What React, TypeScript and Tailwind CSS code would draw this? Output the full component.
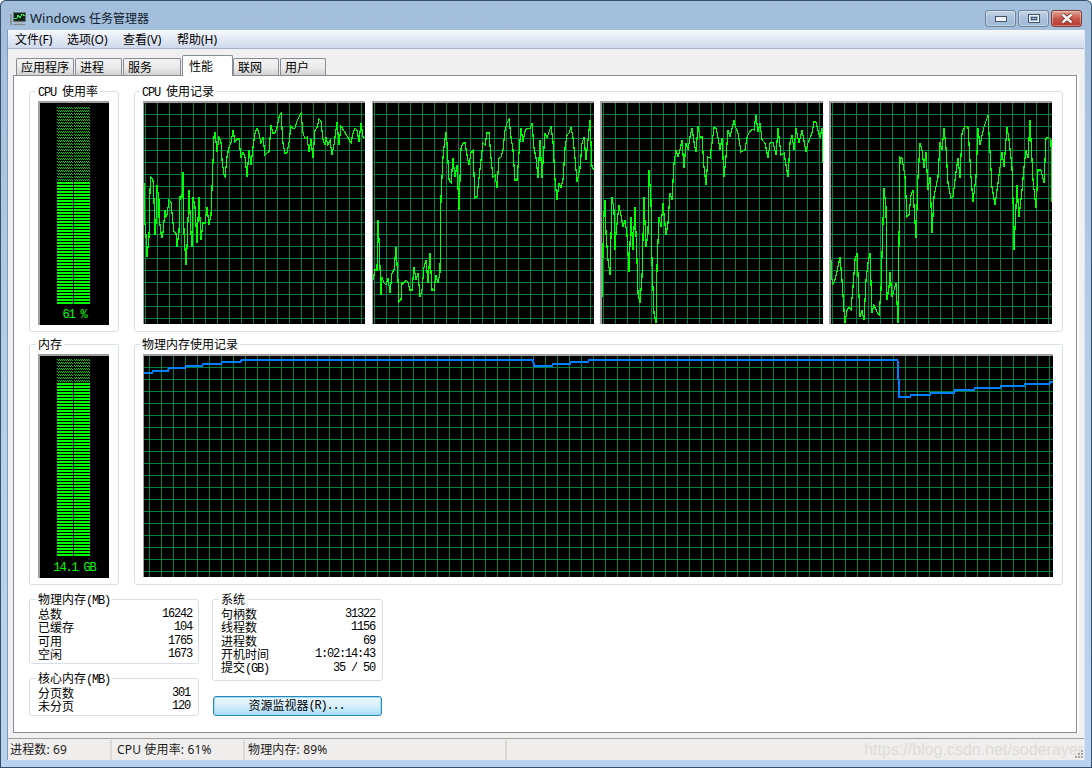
import React from "react";

const G1 = "12,250 12,340 18,405 22,470 27,410 30,270 34,230 38,240 41,300 45,405 49,370 52,255 56,300 58,350 62,400 66,415 70,395 74,330 78,350 82,345 88,300 94,305 98,370 102,395 108,400 112,440 116,395 120,290 126,290 129,215 133,400 137,495 140,440 146,280 148,270 152,400 156,440 160,290 164,320 170,430 178,290 184,420 190,370 196,370 202,320 208,375 214,345 218,185 222,110 226,95 230,155 236,110 242,125 246,180 252,225 256,230 262,170 268,140 274,130 280,90 286,125 292,118 298,118 304,175 310,155 316,170 322,230 328,150 334,195 340,140 346,100 352,85 358,100 364,130 370,110 376,165 382,158 388,155 394,75 400,100 406,98 412,85 418,50 424,38 428,130 434,158 440,160 446,130 452,78 458,88 464,85 470,62 478,50 484,40 490,100 496,118 502,112 508,155 514,118 520,175 526,90 532,85 538,58 544,62 548,120 554,135 558,110 564,135 570,120 576,165 582,135 590,65 596,135 604,78 612,92 620,108 632,130 640,100 646,85 652,90 658,125 664,70 670,110 675,115";
const G2 = "10,540 14,510 20,510 24,360 28,420 32,585 36,530 42,550 48,555 54,535 60,580 66,520 72,510 78,440 84,540 88,605 92,600 96,548 102,548 108,540 114,545 120,570 126,570 132,500 138,540 144,520 150,590 156,570 162,500 168,480 174,550 180,460 186,570 192,570 198,525 204,550 210,515 214,290 218,170 222,140 228,95 232,130 236,240 242,250 248,175 254,230 260,195 266,330 272,145 278,130 284,130 290,165 296,195 302,155 308,150 314,295 320,290 326,235 332,180 338,130 344,135 350,100 356,98 362,175 368,230 374,225 380,265 386,175 392,172 398,150 404,90 410,70 416,58 422,110 428,150 434,240 440,240 446,160 452,85 458,125 464,92 470,85 480,88 486,70 492,145 498,175 504,235 510,120 516,235 524,100 530,115 536,95 542,78 548,125 554,240 560,300 566,250 572,265 578,240 586,145 592,105 598,100 604,80 610,115 616,175 622,245 630,205 636,130 642,110 648,180 656,90 660,60 666,200 672,210";
const G3 = "22,430 22,590 26,340 30,300 34,400 40,480 46,525 52,290 56,330 60,450 64,400 72,315 78,345 84,380 90,360 96,405 102,515 108,350 114,450 120,320 126,480 130,580 136,610 140,530 146,290 152,440 158,400 162,210 168,300 172,490 178,640 182,670 186,500 192,350 198,380 204,310 212,405 218,370 224,280 230,300 236,190 242,150 248,170 254,150 260,120 266,205 272,130 278,150 284,110 290,85 296,125 302,155 308,78 314,110 320,110 326,200 332,255 338,170 344,175 350,130 356,85 362,85 368,110 374,150 380,115 388,230 394,170 400,90 406,110 416,60 424,85 430,100 438,155 450,150 456,110 462,100 470,88 478,90 482,45 488,95 494,70 500,120 510,130 518,175 524,130 534,125 542,165 550,85 558,165 566,160 578,230 586,130 590,105 596,150 604,85 612,130 620,90 632,155 640,130 650,100 656,65 662,65 670,90 676,115 680,85 684,190";
const G4 = "18,480 18,525 24,552 30,540 40,500 46,470 50,540 56,630 60,670 66,630 72,620 78,630 84,560 90,480 96,460 104,650 110,630 116,660 122,540 128,490 136,460 142,640 148,615 156,635 162,645 168,570 172,465 178,265 182,320 186,600 192,560 196,515 200,590 206,570 214,550 220,670 226,170 232,175 240,230 246,350 252,345 258,285 264,270 272,415 278,230 286,130 292,150 298,205 304,155 310,270 316,230 322,400 328,290 340,230 346,125 352,150 358,85 364,145 370,250 378,295 384,290 392,215 400,175 406,235 412,100 420,78 430,80 438,230 444,305 452,230 460,85 466,135 476,80 490,45 500,260 510,315 518,250 530,155 538,200 546,80 552,120 560,200 566,400 568,450 576,255 582,350 590,270 596,200 604,150 610,175 616,60 624,240 632,325 638,210 648,210 658,250 664,115 670,110 678,120 680,305";

const MEM = "144,373 152,373 153,371 168,371 169,368 185,368 186,366 202,366 203,364 221,364 222,362 240,362 242,360 533,360 534,366 552,366 553,364 570,364 571,362 588,362 589,360 897,360 898,362 899,397 910,397 911,395 930,395 931,393 954,393 955,390 974,390 975,388 1000,388 1001,386 1024,386 1025,384 1049,384 1051,382 1053,382";

const mono = "font-['Liberation_Mono','Noto_Sans_CJK_SC',monospace] text-[12px] tracking-[-1.2px]";

function M({ children }: { children: React.ReactNode }) {
  return <span className={mono}>{children}</span>;
}

function Group({ title, left, className, children }: { title: React.ReactNode; left: string; className: string; children?: React.ReactNode }) {
  return (
    <div className={`relative rounded-[3px] border border-[#d5dfe5] ${className}`}>
      <div className={`absolute -top-[7px] bg-white px-[2px] leading-[14px] whitespace-pre ${left}`}>{title}</div>
      {children}
    </div>
  );
}

function DimRow({ x, y }: { x: number; y: number }) {
  const cells: React.ReactNode[] = [];
  for (let r = 0; r < 2; r++) {
    for (let c = r % 2; c < 16; c += 2) {
      cells.push(<rect key={`${r}-${c}`} x={x + c} y={y + r} width="1" height="1" fill="#00d000" />);
    }
  }
  return <>{cells}</>;
}

function Meter({ top, litFrom, dimFrom, last, label }: { top: number; litFrom: number; dimFrom: number; last: number; label: string }) {
  const lit: number[] = [];
  const dim: number[] = [];
  for (let y = last; y >= litFrom; y -= 3) lit.push(y - top);
  for (let y = last - 3 * lit.length; y >= dimFrom; y -= 3) dim.push(y - top);
  return (
    <div className="relative h-[224px] w-[71px] border-t-2 border-l-2 border-[#a0a0a0] bg-black">
      <svg width="69" height="222" className="block" shapeRendering="crispEdges">
        {dim.map((y) => (
          <g key={y}>
            <DimRow x={17} y={y - 2} />
            <DimRow x={34} y={y - 2} />
          </g>
        ))}
        {lit.map((y) => (
          <g key={y}>
            <rect x="17" y={y - 2} width="16" height="2" fill="#00ff00" />
            <rect x="34" y={y - 2} width="16" height="2" fill="#00ff00" />
          </g>
        ))}
      </svg>
      <div className={`absolute bottom-[4px] left-0 right-0 text-center leading-[12px] text-[#00ff00] whitespace-pre ${mono}`}>{label}</div>
    </div>
  );
}

function CpuGraph({ data, originX, left, gridX, w, thin }: { data: string; originX: number; left: number; gridX: number; w: number; thin?: boolean }) {
  const bw = thin ? 1 : 2;
  const iw = w - bw;
  const il = left + bw;
  const pts = data
    .split(" ")
    .map((p) => {
      const [x, y] = p.split(",").map(Number);
      return `${(x / 3 + originX - il).toFixed(0)},${(y / 3 + 100 - 103).toFixed(0)}`;
    })
    .join(" ");
  const vs: number[] = [];
  for (let x = gridX - il; x < iw; x += 12) vs.push(x);
  const hs: number[] = [];
  for (let y = 114 - 103; y < 221; y += 12) hs.push(y);
  return (
    <div className={`h-[223px] shrink-0 border-t-2 border-[#a0a0a0] bg-black ${thin ? "border-l" : "border-l-2"}`} style={{ width: w }}>
      <svg width={iw} height="221" className="block" shapeRendering="crispEdges">
        {vs.map((x) => (
          <rect key={x} x={x} y="0" width="1" height="221" fill="#008040" />
        ))}
        {hs.map((y) => (
          <rect key={y} x="0" y={y} width={iw} height="1" fill="#008040" />
        ))}
        <polyline points={pts} fill="none" stroke="#00ff00" strokeWidth="1.2" />
      </svg>
    </div>
  );
}

function MemGraph() {
  const pts = MEM.split(" ")
    .map((p) => {
      const [x, y] = p.split(",").map(Number);
      return `${x - 144},${y - 356}`;
    })
    .join(" ");
  const vs: number[] = [];
  for (let x = 149 - 144; x < 909; x += 12) vs.push(x);
  const hs: number[] = [];
  for (let y = 367 - 356; y < 221; y += 12) hs.push(y);
  return (
    <div className="h-[223px] w-[910px] border-t-2 border-l border-[#a0a0a0] bg-black">
      <svg width="909" height="221" className="block" shapeRendering="crispEdges">
        {vs.map((x) => (
          <rect key={x} x={x} y="0" width="1" height="221" fill="#008040" />
        ))}
        {hs.map((y) => (
          <rect key={y} x="0" y={y} width="909" height="1" fill="#008040" />
        ))}
        <polyline points={pts} fill="none" stroke="#0080ff" strokeWidth="2" />
      </svg>
    </div>
  );
}

function Row({ label, value }: { label: React.ReactNode; value: string }) {
  return (
    <div className="flex h-[13.5px] items-center justify-between leading-[13.5px] whitespace-pre">
      <span>{label}</span>
      <span className={mono}>{value}</span>
    </div>
  );
}

function Tab({ label, w, active }: { label: string; w: string; active?: boolean }) {
  if (active) {
    return (
      <div className={`relative z-10 h-[21px] rounded-t-[2px] border border-b-0 border-[#898c95] bg-white pl-[6px] pt-[3px] leading-[15px] ${w}`}>{label}</div>
    );
  }
  return (
    <div className={`h-[18px] mr-px rounded-t-[2px] border border-b-0 border-[#898c95] bg-gradient-to-b from-[#f2f2f2] via-[#ebebeb] to-[#cfcfcf] pl-[4px] pt-[1px] leading-[15px] ${w}`}>{label}</div>
  );
}

function CtlButton({ red, children }: { red?: boolean; children: React.ReactNode }) {
  return (
    <div
      className={`flex h-[17px] items-center justify-center rounded-[3px] border ${
        red
          ? "w-[31px] border-[#7d3b36] bg-gradient-to-b from-[#e0a396] via-[#c9584c] to-[#b5362c]"
          : "w-[31px] border-[#6f8299] bg-gradient-to-b from-[#c3d5e8] via-[#a9c0da] to-[#9fbbd8]"
      } shadow-[inset_0_0_0_1px_rgba(255,255,255,0.35)]`}
    >
      {children}
    </div>
  );
}

function AppIcon() {
  return (
    <svg width="16" height="14" viewBox="0 0 16 14" className="block" shapeRendering="crispEdges">
      <rect x="3" y="0" width="13" height="10" fill="#6d7680" />
      <rect x="4" y="1" width="11" height="8" fill="#10261a" />
      <polyline points="4,7 7,6 8,3 10,6 12,2 15,4" fill="none" stroke="#35e05a" strokeWidth="1" />
      <rect x="0" y="2" width="2" height="11" fill="#8b949e" />
      <rect x="5" y="10" width="8" height="2" fill="#aab2ba" />
      <rect x="3" y="12" width="12" height="1" fill="#7f8890" />
    </svg>
  );
}

export default function App() {
  return (
    <div className="flex h-[768px] w-[1092px] flex-col overflow-hidden rounded-t-[6px] bg-gradient-to-b from-[#a3bedb] via-[#b5cee8] to-[#b9d3ee] text-[12px] text-black shadow-[inset_0_0_0_1px_#35506b,inset_0_-1px_0_#0a6a7a] font-['Noto_Sans','Noto_Sans_CJK_SC',sans-serif]">
      {/* title bar */}
      <div className="flex h-[30px] shrink-0 items-start">
        <div className="ml-[10px] mt-[12px]">
          <AppIcon />
        </div>
        <div className="ml-[4px] mt-[10px] text-[12px] leading-[17px] text-[#10202e] whitespace-pre">
          <span className="text-[13px]">Windows </span>任务管理器
        </div>
        <div className="ml-auto mr-[10px] mt-[10px] flex gap-[2px]">
          <CtlButton>
            <svg width="12" height="6" viewBox="0 0 12 6" shapeRendering="crispEdges">
              <rect x="0.5" y="0.5" width="11" height="5" fill="#f2f5f8" stroke="#46566a" />
            </svg>
          </CtlButton>
          <CtlButton>
            <svg width="12" height="9" viewBox="0 0 12 9" shapeRendering="crispEdges">
              <rect x="0.5" y="0.5" width="11" height="8" fill="none" stroke="#46566a" />
              <rect x="1.5" y="1.5" width="9" height="6" fill="none" stroke="#f2f5f8" />
              <rect x="3.5" y="3.5" width="5" height="2" fill="#9fb8d4" stroke="#46566a" />
            </svg>
          </CtlButton>
          <CtlButton red>
            <svg width="14" height="11" viewBox="0 0 14 11">
              <path d="M2.5 1.5 L11.5 9.5 M11.5 1.5 L2.5 9.5" stroke="#6b2b26" strokeWidth="4.2" fill="none" />
              <path d="M2.5 1.5 L11.5 9.5 M11.5 1.5 L2.5 9.5" stroke="#fdf5f3" strokeWidth="2.6" fill="none" />
            </svg>
          </CtlButton>
        </div>
      </div>

      {/* client area */}
      <div className="mx-[8px] flex h-[730px] shrink-0 flex-col bg-[#f0f0f0] shadow-[-1px_0_0_#7f9db9,1px_0_0_#dce6f2]">
        {/* menu */}
        <div className="relative flex h-[19px] shrink-0 items-start border-b border-[#a6b0c8] bg-gradient-to-b from-[#f6f8fc] to-[#cfd9ec] pl-[7px] pt-[2px] leading-[16px]">
          <span className="w-[52px]">文件(F)</span>
          <span className="w-[56px]">选项(O)</span>
          <span className="w-[54px]">查看(V)</span>
          <span>帮助(H)</span>
        </div>

        {/* tab strip */}
        <div className="ml-[8px] mt-[6px] flex h-[21px] shrink-0 items-end -mb-px">
          <Tab label="应用程序" w="w-[58px]" />
          <Tab label="进程" w="w-[47px]" />
          <Tab label="服务" w="w-[58px]" />
          <Tab label="性能" w="w-[51px]" active />
          <Tab label="联网" w="w-[46px]" />
          <Tab label="用户" w="w-[46px]" />
        </div>

        {/* panel */}
        <div className="ml-[5px] h-[658px] w-[1064px] shrink-0 border border-[#898c95] bg-white pl-[15px] pt-[15px] shadow-[2px_0_0_#ffffff] leading-[14px]">
          <div className="flex gap-[15px]">
            <Group title={<><M>CPU </M>使用率</>} left="left-[6px]" className="h-[241px] w-[90px] pl-[8px] pt-[9px]">
              <Meter top={103} litFrom={182} dimFrom={107} last={304} label="61 %" />
            </Group>
            <Group title={<><M>CPU </M>使用记录</>} left="left-[5px]" className="h-[241px] w-[929px] pl-[8px] pt-[9px]">
              <div className="flex gap-[6px]">
                <div className="mr-px">
                  <CpuGraph data={G1} originX={140} left={143} gridX={145} w={222} thin />
                </div>
                <CpuGraph data={G2} originX={370} left={372} gridX={374} w={222} thin />
                <CpuGraph data={G3} originX={595} left={600} gridX={603} w={223} />
                <CpuGraph data={G4} originX={825} left={829} gridX={832} w={223} />
              </div>
            </Group>
          </div>

          <div className="mt-[12px] flex gap-[15px]">
            <Group title="内存" left="left-[6px]" className="h-[241px] w-[90px] pl-[8px] pt-[9px]">
              <Meter top={356} litFrom={383} dimFrom={360} last={556} label="14.1 GB" />
            </Group>
            <Group title="物理内存使用记录" left="left-[5px]" className="h-[241px] w-[929px] pl-[8px] pt-[9px]">
              <MemGraph />
            </Group>
          </div>

          <div className="mt-[14px] flex gap-[13px]">
            <div className="w-[170px]">
              <Group title={<>物理内存<M>(MB)</M></>} left="left-[6px]" className="h-[65px] pl-[8px] pr-[6px] pt-[7.5px]">
                <Row label="总数" value="16242" />
                <Row label="已缓存" value="104" />
                <Row label="可用" value="1765" />
                <Row label="空闲" value="1673" />
              </Group>
              <Group title={<>核心内存<M>(MB)</M></>} left="left-[6px]" className="mt-[14px] h-[38px] pl-[8px] pr-[8px] pt-[7.5px]">
                <Row label="分页数" value="301" />
                <Row label="未分页" value="120" />
              </Group>
            </div>
            <div className="w-[171px]">
              <Group title="系统" left="left-[6px]" className="h-[82px] pl-[8px] pr-[7px] pt-[7.5px]">
                <Row label="句柄数" value="31322" />
                <Row label="线程数" value="1156" />
                <Row label="进程数" value="69" />
                <Row label="开机时间" value="1:02:14:43" />
                <Row label={<>提交<M>(GB)</M></>} value="35 / 50" />
              </Group>
              <div className="ml-px mt-[15px] flex h-[20px] w-[169px] items-center justify-center rounded-[3px] border border-[#2c87b8] bg-gradient-to-b from-[#eaf6fd] via-[#d6effc] to-[#a9dbf6] pr-[2px] shadow-[inset_0_0_0_1px_#9fdcf8] whitespace-pre">
                资源监视器<M>(R)...</M>
              </div>
            </div>
          </div>
        </div>

        {/* status bar */}
        <div className="relative mt-[5px] flex h-[22px] shrink-0 items-center border-t border-[#a0a0a0] bg-[#f0eeec] leading-[20px] tracking-[0.15px] text-[#1c1c1c]">
          <div className="h-[20px] w-[104px] border-r-2 border-[#dcd9d4] pl-[2px]">进程数: 69</div>
          <div className="h-[20px] w-[133px] border-r-2 border-[#dcd9d4] pl-[5px]">CPU 使用率: 61%</div>
          <div className="h-[20px] w-[262px] border-r-2 border-[#dcd9d4] pl-[3px]">物理内存: 89%</div>
          <div className="absolute right-[1px] top-0 text-[16px] leading-[21px] tracking-normal text-[#dedcda] font-['Liberation_Sans',sans-serif]">https://blog.csdn.net/soderayer</div>
          <svg width="9" height="9" viewBox="0 0 9 9" className="absolute bottom-[1px] right-0" shapeRendering="crispEdges">
            {[[6, 0], [3, 3], [6, 3], [0, 6], [3, 6], [6, 6]].map(([x, y]) => (
              <rect key={`${x}-${y}`} x={x} y={y} width="2" height="2" fill="#a8a6a2" />
            ))}
          </svg>
        </div>
      </div>
    </div>
  );
}
